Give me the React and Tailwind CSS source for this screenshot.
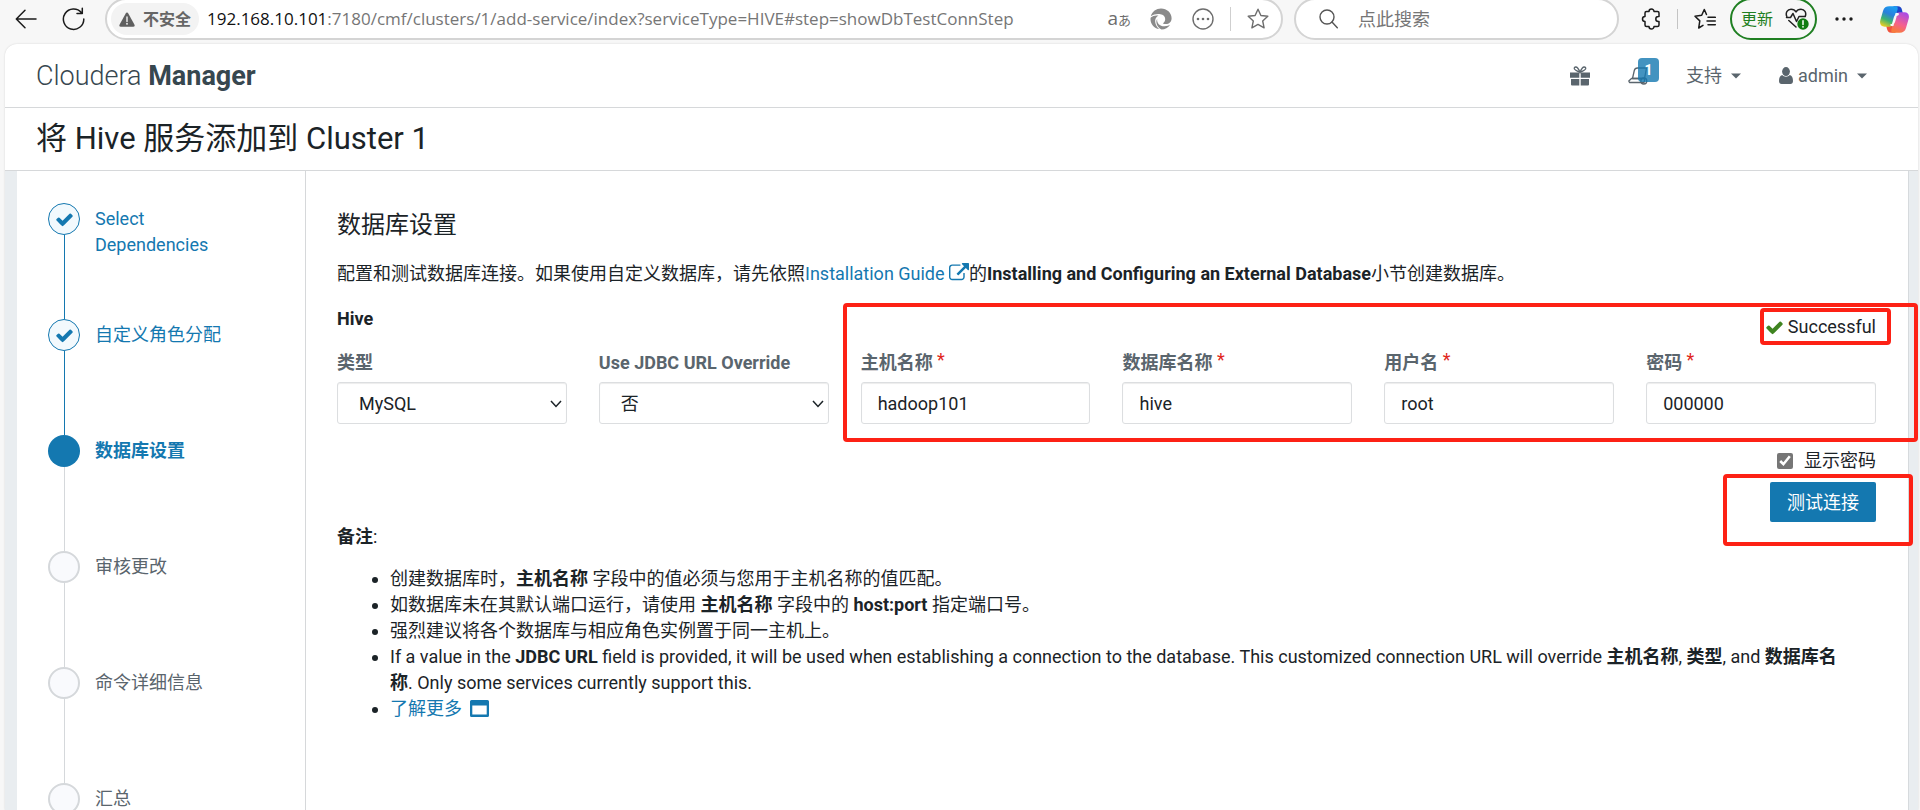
import React from "react";

const steps = [
  { label: "Select Dependencies", state: "done" },
  { label: "自定义角色分配", state: "done" },
  { label: "数据库设置", state: "current" },
  { label: "审核更改", state: "todo" },
  { label: "命令详细信息", state: "todo" },
  { label: "汇总", state: "todo" },
];

function CheckIcon({ className }) {
  return (
    <svg viewBox="0 0 1792 1792" className={className} fill="currentColor" aria-hidden="true">
      <path d="M1671 566q0 40-28 68l-724 724-136 136q-28 28-68 28t-68-28l-136-136-362-362q-28-28-28-68t28-68l136-136q28-28 68-28t68 28l294 295 656-657q28-28 68-28t68 28l136 136q28 28 28 68z" />
    </svg>
  );
}

function ExternalLinkIcon({ className }) {
  return (
    <svg viewBox="0 0 1792 1792" className={className} fill="currentColor" aria-hidden="true">
      <path d="M1408 928v320q0 119-84.5 203.5t-203.5 84.5h-832q-119 0-203.5-84.5t-84.5-203.5v-832q0-119 84.5-203.5t203.5-84.5h704q14 0 23 9t9 23v64q0 14-9 23t-23 9h-704q-66 0-113 47t-47 113v832q0 66 47 113t113 47h832q66 0 113-47t47-113v-320q0-14 9-23t23-9h64q14 0 23 9t9 23zm384-864v512q0 26-19 45t-45 19-45-19l-176-176-652 652q-10 10-23 10t-23-10l-114-114q-10-10-10-23t10-23l652-652-176-176q-19-19-19-45t19-45 45-19h512q26 0 45 19t19 45z" />
    </svg>
  );
}

function Caret() {
  return (
    <svg viewBox="0 0 10 6" className="h-[6px] w-[10px]" fill="currentColor" aria-hidden="true">
      <path d="M0 0.5h10l-5 5z" />
    </svg>
  );
}

function CopilotIcon() {
  return (
    <svg viewBox="0 0 87 81" className="h-[27px] w-[29px]" aria-hidden="true">
      <defs>
        <linearGradient id="copilotCool" x1="0.6" y1="0" x2="0.2" y2="1">
          <stop offset="0" stopColor="#1b9cf0" />
          <stop offset="0.35" stopColor="#2a7fdc" />
          <stop offset="0.65" stopColor="#3bb273" />
          <stop offset="1" stopColor="#f4cf1c" />
        </linearGradient>
        <linearGradient id="copilotWarm" x1="0.6" y1="0" x2="0.2" y2="1">
          <stop offset="0" stopColor="#f77a3c" />
          <stop offset="0.4" stopColor="#f5608f" />
          <stop offset="1" stopColor="#a54bea" />
        </linearGradient>
      </defs>
      <path d="M40 1H54C61 1 64 5 66 12L69 24H57C50 24 46 18 40 1Z" fill="#1c45c8" />
      <path d="M47 80H33C26 80 23 76 21 69L18 57H30C37 57 41 63 47 80Z" fill="#f0533c" />
      <path
        d="M28 1H48C56 1 53 12 50 19L39 54C37 60 34 62 28 62H14C3 62-2 54 1 43L9 15C12 5 18 1 28 1Z"
        fill="url(#copilotCool)"
      />
      <path
        transform="rotate(180 43.5 40.5)"
        d="M28 1H48C56 1 53 12 50 19L39 54C37 60 34 62 28 62H14C3 62-2 54 1 43L9 15C12 5 18 1 28 1Z"
        fill="url(#copilotWarm)"
      />
      <path d="M56 24C48 25 46 29 44 36L38 57H32C40 55 41 52 43 45L49 24Z" fill="#f7f7f7" stroke="#f7f7f7" strokeWidth="6" />
    </svg>
  );
}

function BrowserBar() {
  return (
    <header className="flex h-[44px] shrink-0 items-start overflow-hidden font-['Open_Sans','Noto_Sans_CJK_SC',sans-serif]">
      <div className="-mt-0.5 flex h-[42px] min-w-0 flex-1 items-center">
        <div className="flex w-[105px] shrink-0 items-center pl-[15px]">
          <button aria-label="后退">
            <svg viewBox="0 0 22 20" className="h-5 w-[22px]" fill="none" stroke="#1b1b1b" strokeWidth="1.5" strokeLinecap="round" strokeLinejoin="round">
              <path d="M21 10H1.5M10 1.2 1.3 10l8.700 8.800" />
            </svg>
          </button>
          <button aria-label="刷新" className="ml-[25px]">
            <svg viewBox="0 0 23 24" className="h-6 w-[23px]" fill="none" stroke="#1b1b1b" strokeWidth="1.500" strokeLinecap="round" strokeLinejoin="round">
              <path d="M21.800 12A10.200 10.200 0 1 1 19.500 5.700M20.300 1.300v5.200H15" />
            </svg>
          </button>
        </div>

        <div className="flex h-full min-w-0 flex-1 items-center rounded-full border-2 border-[#d4d4d4] bg-white pr-3 pl-1">
          <span className="flex h-8 shrink-0 items-center gap-2 rounded-full bg-[#f3f3f3] px-2 text-[16px] font-bold text-[#666]">
            <svg viewBox="0 0 16 15" className="h-[15px] w-4" aria-hidden="true">
              <path d="M8 0.600C8.600 0.600 9 0.900 9.300 1.400l6.200 11.300c0.500 1-0.100 2-1.200 2H1.700c-1.100 0-1.700-1-1.200-2L6.700 1.400C7 0.900 7.400 0.600 8 0.600z" fill="#5f5f5f" />
              <path d="M8 5v4.500" stroke="#fff" strokeWidth="1.300" strokeLinecap="round" />
              <circle cx="8" cy="11.800" r="0.900" fill="#fff" />
            </svg>
            不安全
          </span>
          <span className="ml-2 min-w-0 flex-1 truncate text-[17px] text-[#767676]">
            <span className="text-[#111]">192.168.10.101</span>:7180/cmf/clusters/1/add-service/index?serviceType=HIVE#step=showDbTestConnStep
          </span>
          <button className="flex items-baseline text-[#6d6d6d]" aria-label="翻译">
            <span className="text-[19px] leading-6">a</span>
            <span className="text-[13px] leading-6">あ</span>
          </button>
          <button className="ml-[19px]" aria-label="站点服务">
            <svg viewBox="0 0 22 22" className="size-[22px]">
              <path
                d="M0.800 8.200C2.200 3.600 6.200 0.500 11 0.500c5.900 0 10.600 4.400 10.600 9.700 0 3.600-2.500 5.800-5.800 5.800-2 0-3-.6-3-.6 1.600-1 2.400-2.500 2.400-4.300 0-2.600-2-4.500-4.700-4.900C7 5.700 3.500 6.300 0.800 8.200z"
                fill="#8a8a8a"
              />
              <path
                d="M0.500 11c0-1 .3-1.600.3-1.600C2.800 7.700 5.800 7 8.500 7.600 6 9 4.900 11.400 5.200 14c.3 2.800 1.700 5 3.900 7C4.200 20.500 0.500 16.300 0.500 11z"
                fill="#8a8a8a"
              />
              <path
                d="M7.200 11c-.7 4 2.600 7.400 7.300 7.300 2.400 0 4.500-.8 5.600-1.500C18.200 19.800 15 21.500 11.500 21.500 8.500 20 6.700 17.500 6.400 14.500 6.300 13 6.600 11.900 7.200 11z"
                fill="#8a8a8a"
              />
            </svg>
          </button>
          <button className="ml-5" aria-label="更多">
            <svg viewBox="0 0 22 22" className="size-[22px]">
              <circle cx="11" cy="11" r="10" fill="none" stroke="#6d6d6d" strokeWidth="1.400" />
              <g fill="#6d6d6d">
                <circle cx="6" cy="11" r="1.300" />
                <circle cx="11" cy="11" r="1.300" />
                <circle cx="16" cy="11" r="1.300" />
              </g>
            </svg>
          </button>
          <span className="mr-4 ml-4 h-6 w-px bg-[#cfcfcf]" />
          <button aria-label="收藏">
            <svg viewBox="0 0 22 22" className="size-[22px]" fill="none" stroke="#6d6d6d" strokeWidth="1.400" strokeLinejoin="round">
              <path d="M11 1.200l2.900 6.300 6.900.8-5.100 4.700 1.400 6.800L11 16.400l-6.100 3.400 1.400-6.800L1.200 8.300l6.900-.8z" />
            </svg>
          </button>
        </div>

        <label className="ml-[11px] flex h-full w-[325px] shrink-0 items-center gap-5 rounded-full border-2 border-[#d4d4d4] bg-white pl-[23px]">
          <svg viewBox="0 0 19 20" className="h-5 w-[19px] shrink-0" fill="none" stroke="#555" strokeWidth="1.400" strokeLinecap="round" aria-hidden="true">
            <circle cx="8" cy="8" r="7" />
            <path d="M13 13l5.300 5.800" />
          </svg>
          <input type="text" placeholder="点此搜索" aria-label="点此搜索" className="min-w-0 flex-1 bg-transparent text-[18px] outline-none placeholder:text-[#767676]" />
        </label>

        <div className="flex h-full w-[301px] shrink-0 items-center pr-[11px] pl-[22px]">
          <button aria-label="扩展">
            <svg viewBox="0 0 20 22" className="h-[22px] w-5" fill="none" stroke="#1b1b1b" strokeWidth="1.500" strokeLinejoin="round">
              <path d="M8 3.600a2.500 2.500 0 0 1 5 0H16.500a1.500 1.500 0 0 1 1.500 1.500V8.500h-.7a2.500 2.500 0 0 0 0 5H18v3.400a1.500 1.500 0 0 1-1.500 1.500H13a2.500 2.500 0 0 1-5 0H5.500A1.500 1.500 0 0 1 4 16.900V13.500a2.500 2.500 0 0 1 0-5V5.100A1.500 1.500 0 0 1 5.500 3.600z" />
            </svg>
          </button>
          <span className="mx-4 h-5 w-px bg-[#c4c4c4]" />
          <button aria-label="收藏夹">
            <svg viewBox="0 0 22 22" className="size-[22px]" fill="none" stroke="#1b1b1b" strokeWidth="1.500" strokeLinejoin="round" strokeLinecap="round">
              <path d="M12.500 6.500L10.300 1.500 7.700 7.200 1 8.200l4.800 4.700L4.700 20l4.300-2.700M14 9.300h7.300M13 13h8.300M14 16.700h7.300" />
            </svg>
          </button>
          <button className="ml-[14px] flex h-full w-[87px] items-center gap-3 rounded-full border-2 border-[#1f7f22] pl-[9px] text-[16px] text-[#1f7f22]">
            <span className="shrink-0">更新</span>
            <svg viewBox="0 0 24 22" className="h-[22px] w-6 shrink-0" aria-hidden="true">
              <g fill="none" stroke="#222" strokeWidth="1.500" strokeLinecap="round" strokeLinejoin="round">
                <path d="M1.800 8.500C0.200 4.500 2.500 1.200 6 1.200c2.300 0 4 1 5 2.800 1-1.800 2.700-2.800 5-2.800 3.500 0 5.800 3.300 4.200 7.300M3.800 12.500 11 19" />
                <path d="M1.500 9.500h4l2.500-4 3.500 8 2.500-5h6" />
              </g>
              <circle cx="18" cy="16" r="5.700" fill="#107c10" />
              <path d="M18 12.800v3.600" stroke="#fff" strokeWidth="1.500" strokeLinecap="round" />
              <circle cx="18" cy="18.800" r="0.900" fill="#fff" />
            </svg>
          </button>
          <button className="ml-[18px]" aria-label="设置及其他">
            <svg viewBox="0 0 18 4" className="h-1 w-[18px]" fill="#1b1b1b">
              <circle cx="2" cy="2" r="1.700" />
              <circle cx="9" cy="2" r="1.700" />
              <circle cx="16" cy="2" r="1.700" />
            </svg>
          </button>
          <button className="ml-auto" aria-label="Copilot">
            <CopilotIcon />
          </button>
        </div>
      </div>
    </header>
  );
}

function AppHeader() {
  return (
    <header className="flex h-16 shrink-0 items-center border-b border-[#d6d8da] pr-[51px] pl-[31px] text-[18px] text-[#5a656d]">
      <a href="#home" className="text-[27px] leading-9 font-light text-[#37474f]">
        Cloudera <b className="font-bold">Manager</b>
      </a>
      <nav className="ml-auto flex items-center">
        <button aria-label="新功能">
          <svg viewBox="0 0 20 20" className="size-5" fill="currentColor">
            <path d="M0 6.500h9.300v5.300H0zM10.700 6.500H20v5.300h-9.300zM1 13h8.300v6.500H2a1 1 0 0 1-1-1zM10.700 13H19v5.500a1 1 0 0 1-1 1h-7.300z" />
            <g fill="none" stroke="currentColor" strokeWidth="1.400">
              <path d="M10 6.300C8.500 2.500 7 1 5.800 1 4.500 1 4 2 4.500 3 5.200 4.300 7.500 5.300 10 6.300zM10 6.300C11.500 2.500 13 1 14.200 1c1.300 0 1.800 1 1.300 2-.7 1.300-3 2.300-5.500 3.300z" />
            </g>
          </svg>
        </button>
        <button className="relative ml-[38px]" aria-label="通知 1">
          <svg viewBox="0 0 20 18" className="h-[18px] w-5" fill="none" stroke="currentColor" strokeWidth="1.300" strokeLinejoin="round">
            <path d="M4.500 11.500 6.300 3.500C6.700 1.700 7.800 1 9.500 1h9L16.500 11.500z" />
            <path d="M3.500 11.500H17L16 15.500H1.500L0.800 14z" />
            <circle cx="15.800" cy="14" r="3" />
          </svg>
          <span className="absolute -top-[9px] left-[10px] flex h-6 w-[21px] items-center justify-center rounded-sm bg-[#1478b0]/80 text-[14px] leading-5 font-bold text-white">
            1
          </span>
        </button>
        <button className="ml-[38px] flex items-center gap-[9px]">
          支持 <Caret />
        </button>
        <button className="ml-[38px] flex items-center gap-[9px]">
          <span className="flex items-center gap-[5px]">
            <svg viewBox="0 0 14 17" className="h-[17px] w-[14px]" fill="currentColor" aria-hidden="true">
              <ellipse cx="7" cy="4.600" rx="3.900" ry="4.500" />
              <path d="M3.200 8c1 1.100 2.300 1.700 3.800 1.700S9.800 9.100 10.800 8C13 8.600 14 10.800 14 14c0 1.800-1 3-2.600 3H2.600C1 17 0 15.800 0 14c0-3.200 1-5.400 3.200-6z" />
            </svg>
            admin
          </span>
          <Caret />
        </button>
      </nav>
    </header>
  );
}

const stepCircle = {
  done: "border border-[#1478b0] bg-[#f2f9fd]",
  current: "bg-[#1478b0]",
  todo: "border-2 border-[#d5d8db] bg-[#f9fafd]",
};
const stepLabel = {
  done: "text-[#1478b0]",
  current: "font-bold text-[#1478b0]",
  todo: "text-[#5a656d]",
};

function Sidebar() {
  return (
    <aside className="w-[289px] shrink-0 border-r border-[#d6d8da] pt-8 pl-[31px]">
      <ol>
        {steps.map((s, i) => (
          <li key={s.label} className="flex h-[116px] gap-[15px]">
            <div className="flex flex-col items-center">
              <span className={`flex size-8 shrink-0 items-center justify-center rounded-full text-[#1478b0] ${stepCircle[s.state]}`}>
                {s.state === "done" && <CheckIcon className="size-[19px]" />}
              </span>
              {i < steps.length - 1 && (
                <span className={`w-px flex-1 ${s.state === "done" ? "bg-[#1478b0]" : "bg-[#d5d8db]"}`} />
              )}
            </div>
            <a href={`#step-${i + 1}`} className={`mt-[3px] w-[144px] self-start leading-[26px] ${stepLabel[s.state]}`}>
              {s.label}
            </a>
          </li>
        ))}
      </ol>
    </aside>
  );
}

function Field({ id, label, required, children }) {
  return (
    <div className="flex min-w-0 flex-col gap-[6px]">
      <label htmlFor={id} className="font-bold leading-[26px] whitespace-nowrap text-[#5a656d]">
        {label}
        {required && <span className="align-[3px] leading-none font-normal text-[#e0261c]"> *</span>}
      </label>
      {children}
    </div>
  );
}

function TextField({ id, label, value }) {
  return (
    <Field id={id} label={label} required>
      <input id={id} type="text" defaultValue={value} className="h-[42px] w-full rounded-[3px] border border-[#dcdee0] bg-white px-4 shadow-[inset_0_1px_1px_rgba(0,0,0,0.075)] outline-none" />
    </Field>
  );
}

function SelectField({ id, label, value }) {
  return (
    <Field id={id} label={label}>
      <div className="relative">
        <select id={id} defaultValue={value} className="h-[42px] w-full appearance-none rounded-[3px] border border-[#dcdee0] bg-white pr-8 pl-[21px] shadow-[inset_0_1px_1px_rgba(0,0,0,0.075)] outline-none">
          <option>{value}</option>
        </select>
        <svg viewBox="0 0 12 8" className="pointer-events-none absolute top-[18px] right-[5px] h-2 w-3" fill="none" stroke="#1b2327" strokeWidth="1.500" aria-hidden="true">
          <path d="M1 1l5 5.500L11 1" />
        </svg>
      </div>
    </Field>
  );
}

function Highlight({ className }) {
  return <span aria-hidden="true" className={`pointer-events-none absolute rounded-[4px] border-4 border-[#fd2115] ${className}`} />;
}

function DatabaseSetup() {
  return (
    <main className="min-w-0 flex-1 pt-[38px] pr-8 pl-[31px] text-[#1b2327]">
      <h2 className="text-[24px] leading-8">数据库设置</h2>
      <p className="mt-5 leading-[26px]">
        配置和测试数据库连接。如果使用自定义数据库，请先依照
        <a href="#guide" className="text-[#1478b0]">
          Installation Guide <ExternalLinkIcon className="inline size-5 align-[-3px]" />
        </a>
        的<b className="font-bold">Installing and Configuring an External Database</b>小节创建数据库。
      </p>

      <form className="mt-[19px]" onSubmit={(e) => e.preventDefault()}>
        <div className="relative grid grid-cols-6 gap-x-8 gap-y-[10px]">
          <h3 className="col-span-2 h-[34px] leading-[26px] font-bold">Hive</h3>
          <div className="col-span-4 flex items-end justify-end">
            <span className="relative flex items-center gap-1 leading-[26px]">
              <CheckIcon className="size-[19px] text-[#3f8420]" />
              Successful
              <Highlight className="-top-[6px] -right-[15px] -bottom-[5px] -left-[5px]" />
            </span>
          </div>
          <SelectField id="type" label="类型" value="MySQL" />
          <SelectField id="jdbc" label="Use JDBC URL Override" value="否" />
          <TextField id="host" label="主机名称" value="hadoop101" />
          <TextField id="db" label="数据库名称" value="hive" />
          <TextField id="user" label="用户名" value="root" />
          <TextField id="password" label="密码" value="000000" />
          <Highlight className="col-start-3 col-end-7 row-start-1 row-end-3 -top-[3px] -right-[42px] -bottom-[18px] -left-[18px]" />
        </div>

        <div className="mt-6 flex flex-col items-end gap-2">
          <label className="flex items-center gap-[11px] leading-[26px]">
            <input type="checkbox" defaultChecked className="size-4 accent-[#767676]" />
            显示密码
          </label>
          <div className="relative">
            <button className="block h-10 rounded-[2px] bg-[#1478b0] px-[17px] text-white">测试连接</button>
            <Highlight className="-top-2 -right-[37px] -bottom-6 -left-[47px]" />
          </div>
        </div>
      </form>

      <p className="mt-0.5 leading-[26px]">
        <b className="font-bold">备注</b>:
      </p>
      <ul className="mt-4 list-disc pr-6 pl-[53px] leading-[26px]">
        <li>
          创建数据库时，<b className="font-bold">主机名称</b> 字段中的值必须与您用于主机名称的值匹配。
        </li>
        <li>
          如数据库未在其默认端口运行，请使用 <b className="font-bold">主机名称</b> 字段中的 <b className="font-bold">host:port</b> 指定端口号。
        </li>
        <li>强烈建议将各个数据库与相应角色实例置于同一主机上。</li>
        <li>
          If a value in the <b className="font-bold">JDBC URL</b> field is provided, it will be used when establishing a connection to the database. This customized connection URL will override{" "}
          <b className="font-bold">主机名称</b>, <b className="font-bold">类型</b>, and <b className="font-bold">数据库名称</b>. Only some services currently support this.
        </li>
        <li>
          <a href="#more" className="text-[#1478b0]">
            了解更多{" "}
            <svg viewBox="0 0 19 17" className="ml-1 inline h-[17px] w-[19px] align-[-2px]" aria-hidden="true">
              <path fillRule="evenodd" fill="currentColor" d="M1.500 0h16A1.500 1.500 0 0 1 19 1.500v14a1.500 1.500 0 0 1-1.500 1.500h-16A1.500 1.500 0 0 1 0 15.500v-14A1.500 1.500 0 0 1 1.500 0zM2.300 5.500v9h14.400v-9z" />
            </svg>
          </a>
        </li>
      </ul>
    </main>
  );
}

export default function App() {
  return (
    <div className="flex h-screen flex-col overflow-hidden bg-[#f7f7f7] font-[Roboto,'Noto_Sans_CJK_SC',sans-serif] text-[18px]">
      <BrowserBar />
      <div className="mr-0.5 ml-[5px] flex min-h-0 flex-1 flex-col rounded-t-xl bg-white shadow-[0_0_2px_rgba(0,0,0,0.15)]">
        <AppHeader />
        <div className="flex h-[63px] shrink-0 items-center border-b border-[#d6d8da] pl-[31px]">
          <h1 className="text-[31px] leading-10 text-[#1b2327]">将 Hive 服务添加到 Cluster 1</h1>
        </div>
        <div className="flex min-h-0 flex-1 bg-[#e9edf0] pr-[9px] pl-3">
          <div className="flex min-w-0 flex-1 border-r border-[#d6dadd] bg-white">
            <Sidebar />
            <DatabaseSetup />
          </div>
        </div>
      </div>
    </div>
  );
}
